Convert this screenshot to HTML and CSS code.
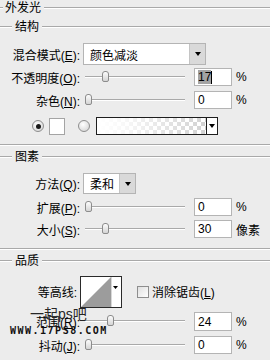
FILE: index.html
```html
<!DOCTYPE html>
<html lang="zh">

<head>
    <meta charset="UTF-8">
    <meta name="viewport" content="width=device-width, initial-scale=1.0">
    <title>外发光</title>
    <link rel="stylesheet" href="styles.css">
</head>

<body>

    <div class="panel">
        <div class="head head-main"><span>外发光</span></div>
        <div class="head head-first"><span>结构</span></div>

        <div class="row row-blend">
            <label class="lbl">混合模式(<u>E</u>):</label>
            <div class="select select-wide">
                <span class="select-text">颜色减淡</span>
                <span class="select-btn"><i class="tri"></i></span>
            </div>
        </div>

        <div class="row row-opacity">
            <label class="lbl">不透明度(<u>O</u>):</label>
            <div class="slider"><span class="thumb" style="left:17px"></span></div>
            <div class="num"><span class="sel">17</span><span class="caret"></span></div>
            <span class="unit">%</span>
        </div>

        <div class="row row-noise">
            <label class="lbl">杂色(<u>N</u>):</label>
            <div class="slider"><span class="thumb" style="left:0px"></span></div>
            <div class="num">0</div>
            <span class="unit">%</span>
        </div>

        <div class="row row-colors">
            <span class="radio checked"></span>
            <span class="swatch"></span>
            <span class="radio radio-2"></span>
            <div class="gradient">
                <span class="gradient-fill"></span>
                <span class="gradient-btn"><i class="tri"></i></span>
            </div>
        </div>

        <div class="sep sep-1"></div>
        <div class="head"><span>图素</span></div>

        <div class="row row-method">
            <label class="lbl">方法(<u>Q</u>):</label>
            <div class="select select-small">
                <span class="select-text">柔和</span>
                <span class="select-btn"><i class="tri"></i></span>
            </div>
        </div>

        <div class="row row-spread">
            <label class="lbl">扩展(<u>P</u>):</label>
            <div class="slider"><span class="thumb" style="left:0px"></span></div>
            <div class="num">0</div>
            <span class="unit">%</span>
        </div>

        <div class="row row-size">
            <label class="lbl">大小(<u>S</u>):</label>
            <div class="slider"><span class="thumb" style="left:17px"></span></div>
            <div class="num">30</div>
            <span class="unit">像素</span>
        </div>

        <div class="sep sep-2"></div>
        <div class="head"><span>品质</span></div>

        <div class="row row-contour">
            <label class="lbl lbl-contour">等高线:</label>
            <div class="contour">
                <svg width="42" height="32" viewBox="0 0 42 32">
                    <rect x="0.5" y="0.5" width="41" height="31" fill="#fff" stroke="#2a2a2a"/>
                    <polygon points="1,31 31,1 31,31" fill="#9c9c9c"/>
                    <line x1="31.5" y1="1" x2="31.5" y2="31" stroke="#d8d8d8"/>
                    <polygon points="33,10 38,10 35.5,13" fill="#000"/>
                </svg>
            </div>
            <span class="check"></span>
            <span class="check-text">消除锯齿(<u>L</u>)</span>
        </div>

        <div class="row row-range">
            <label class="lbl">范围(<u>R</u>):</label>
            <div class="slider"><span class="thumb" style="left:22px"></span></div>
            <div class="num">24</div>
            <span class="unit">%</span>
        </div>

        <div class="row row-jitter">
            <label class="lbl">抖动(<u>J</u>):</label>
            <div class="slider"><span class="thumb" style="left:0px"></span></div>
            <div class="num">0</div>
            <span class="unit">%</span>
        </div>

        <div class="watermark">
            <span class="wm-cn">一起ps吧</span>
            <span class="wm-url">WWW.17PS8.COM</span>
        </div>
    </div>

</body>

</html>
```

FILE: styles.css
```css
body {
    margin: 0;
    background-color: #ececec;
    font-family: "Liberation Sans", "Noto Sans CJK SC", sans-serif;
    font-size: 12px;
    color: #000;
}

.panel {
    position: relative;
    width: 270px;
    height: 360px;
    overflow: hidden;
    display: flex;
    flex-direction: column;
}

/* group headers with etched lines */
.head {
    display: flex;
    align-items: center;
    height: 16px;
    margin-top: 3px;
    line-height: 16px;
}

.head::before,
.head::after {
    content: "";
    height: 0;
    border-top: 1px solid #a9a9a9;
    border-bottom: 1px solid #fff;
}

.head::before {
    width: 12px;
}

.head::after {
    flex: 1;
}

.head span {
    padding: 0 3px;
}

.head-main {
    margin-top: 0;
}

.head-main::before {
    width: 3px;
}

.head-main span {
    padding: 0 3px 0 2px;
}

.sep {
    height: 0;
    border-top: 1px solid #a9a9a9;
    border-bottom: 1px solid #fff;
}

.sep-1 {
    margin-top: 9px;
}

.sep-2 {
    margin-top: 10px;
}

/* rows */
.row {
    display: flex;
    align-items: center;
    height: 18px;
}

.row-blend {
    height: 22px;
    margin-top: 8px;
}

.row-opacity {
    margin-top: 3px;
}

.row-noise {
    margin-top: 5px;
}

.row-colors {
    margin-top: 8px;
    padding-left: 32px;
}

.row-method {
    height: 21px;
    margin-top: 8px;
}

.row-spread,
.row-size {
    margin-top: 4px;
}

.row-contour {
    height: 31px;
    margin-top: 7px;
}

.row-range {
    height: 19px;
    margin-top: 5px;
}

.row-jitter {
    margin-top: 5px;
}

.lbl {
    width: 80px;
    text-align: right;
    white-space: nowrap;
}

.lbl-contour {
    width: 77px;
    margin-right: 3px;
}

/* dropdowns */
.select {
    display: flex;
    height: 100%;
    margin-left: 3px;
    box-sizing: border-box;
    border: 1px solid #b4b4b4;
    background: #fff;
}

.select-wide {
    width: 123px;
}

.select-small {
    width: 53px;
}

.select-text {
    flex: 1;
    display: flex;
    align-items: center;
    padding-left: 6px;
}

.select-btn {
    width: 15px;
    display: flex;
    align-items: center;
    justify-content: center;
    background: #d9d9d9;
    border-left: 1px solid #c4c4c4;
}

.tri {
    width: 0;
    height: 0;
    border-left: 3px solid transparent;
    border-right: 3px solid transparent;
    border-top: 4px solid #000;
}

/* sliders */
.slider {
    position: relative;
    width: 100px;
    height: 100%;
    margin-left: 5px;
}

.slider::before {
    content: "";
    position: absolute;
    left: 0;
    right: 0;
    top: 8px;
    border-top: 1px solid #a9a9a9;
    border-bottom: 1px solid #fff;
}

.thumb {
    position: absolute;
    top: 3px;
    width: 5px;
    height: 9px;
    border: 1px solid #8c8c8c;
    border-radius: 3px 3px 2px 2px;
    background: linear-gradient(#fdfdfd, #d4d4d4);
}

.num {
    display: flex;
    align-items: center;
    width: 38px;
    height: 18px;
    margin-left: 9px;
    padding-left: 3px;
    box-sizing: border-box;
    border: 1px solid #b4b4b4;
    background: #fff;
}

.row-range .num {
    height: 19px;
}

.sel {
    background: #a3a3a3;
}

.caret {
    width: 1px;
    height: 13px;
    background: #000;
}

.unit {
    margin-left: 4px;
}

/* colour row */
.radio {
    width: 10px;
    height: 10px;
    border: 1px solid #8e8e8e;
    border-radius: 50%;
    background: radial-gradient(circle at 40% 35%, #fff, #cfcfcf);
    display: flex;
    align-items: center;
    justify-content: center;
}

.radio.checked::after {
    content: "";
    width: 5px;
    height: 5px;
    border-radius: 50%;
    background: #1a1a1a;
}

.radio-2 {
    margin-left: 13px;
}

.swatch {
    width: 16px;
    height: 17px;
    margin-left: 5px;
    box-sizing: border-box;
    border: 1px solid #a4a4a4;
    background: #fff;
}

.gradient {
    display: flex;
    width: 122px;
    height: 18px;
    margin-left: 6px;
    box-sizing: border-box;
    border: 1px solid #1e1e1e;
}

.gradient-fill {
    flex: 1;
    background-color: #fff;
    background-image:
        linear-gradient(to right, #fff 0%, rgba(255, 255, 255, 0.85) 25%, rgba(255, 255, 255, 0) 100%),
        linear-gradient(45deg, #d2d2d2 25%, transparent 25%, transparent 75%, #d2d2d2 75%),
        linear-gradient(45deg, #d2d2d2 25%, transparent 25%, transparent 75%, #d2d2d2 75%);
    background-size: 100% 100%, 8px 8px, 8px 8px;
    background-position: 0 0, 0 0, 4px 4px;
}

.gradient-btn {
    width: 10px;
    display: flex;
    align-items: center;
    justify-content: center;
    background: #fff;
    border-left: 1px solid #1e1e1e;
}

/* contour row */
.contour {
    height: 32px;
}

.contour svg {
    display: block;
}

.check {
    width: 10px;
    height: 10px;
    margin-left: 15px;
    border: 1px solid #8e8e8e;
    background: linear-gradient(135deg, #e0e0e0, #fff);
}

.check-text {
    margin-left: 3px;
}

/* watermark laid over the range row */
.watermark {
    position: absolute;
    left: 10px;
    top: 303px;
    display: flex;
    flex-direction: column;
    align-items: flex-start;
    pointer-events: none;
}

.wm-cn {
    margin-left: 20px;
    font-size: 14px;
    line-height: 22px;
    color: #262626;
}

.wm-url {
    margin-top: 1px;
    font-family: "DejaVu Sans Mono", monospace;
    font-weight: bold;
    font-size: 10px;
    line-height: 10px;
    letter-spacing: 1.5px;
    color: #111;
}
```
